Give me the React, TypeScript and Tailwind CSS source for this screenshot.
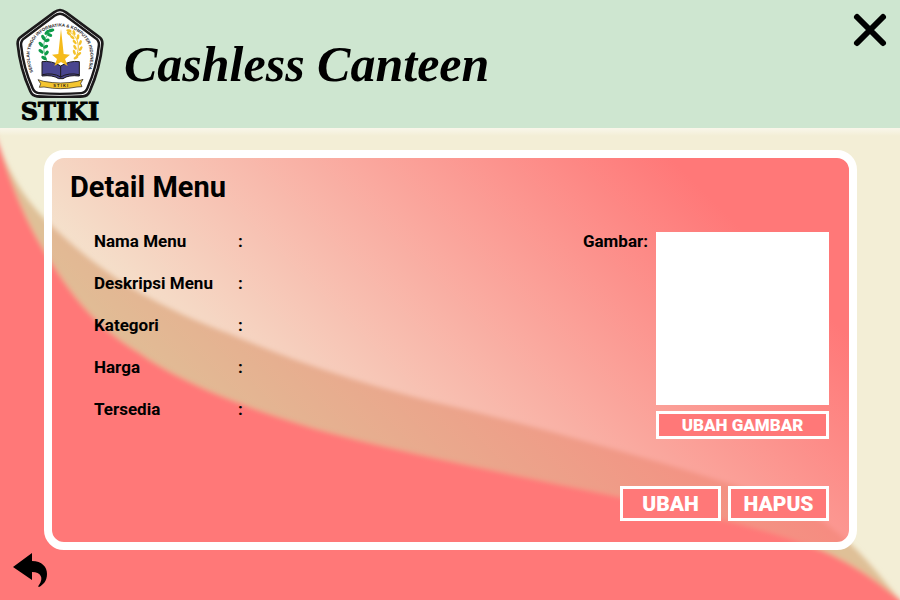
import React from "react";

const fields = ["Nama Menu", "Deskripsi Menu", "Kategori", "Harga", "Tersedia"];

function Crest() {
  const pentagon =
    "M180 30 Q188 30 198 37 L296 110 Q308 118 307 132 Q300 205 269 274 Q263 288 249 289 Q180 294 111 289 Q97 288 91 274 Q60 205 53 132 Q52 118 64 110 L162 37 Q172 30 180 30 Z";
  return (
    <svg viewBox="48 24 264 270" className="h-[90px] w-[88px]" aria-hidden="true">
      <path d={pentagon} fill="#fff" stroke="#1c1a1b" strokeWidth="8" />
      <g transform="translate(180 168) scale(.92) translate(-180 -168)">
        <path d={pentagon} fill="#fff" stroke="#1c1a1b" strokeWidth="8" />
      </g>
      <path id="crest-ring" d="M100 216 C70 152 102 84 180 79 C258 84 290 152 260 220" fill="none" />
      <text fontFamily="'Liberation Sans', Arial, sans-serif" fontSize="13" fontWeight="700" fill="#1c1a1b">
        <textPath href="#crest-ring">SEKOLAH TINGGI INFORMATIKA &amp; KOMPUTER INDONESIA</textPath>
      </text>
      <g fill="none" stroke="#0c9b49" strokeWidth="2">
        <path d="M161 90 C132 104 122 138 141 184" />
      </g>
      <g fill="#0c9b49">
        <ellipse cx="154" cy="91" rx="9" ry="5" transform="rotate(-10 154 91)" />
        <ellipse cx="141" cy="97" rx="9" ry="5" transform="rotate(-45 141 97)" />
        <ellipse cx="149" cy="105" rx="8" ry="5" transform="rotate(20 149 105)" />
        <ellipse cx="130" cy="113" rx="9" ry="5" transform="rotate(60 130 113)" />
        <ellipse cx="141" cy="121" rx="8" ry="5" transform="rotate(-15 141 121)" />
        <ellipse cx="123" cy="133" rx="9" ry="5" transform="rotate(50 123 133)" />
        <ellipse cx="137" cy="140" rx="8" ry="5" transform="rotate(-25 137 140)" />
        <ellipse cx="123" cy="154" rx="9" ry="5" transform="rotate(40 123 154)" />
        <ellipse cx="140" cy="159" rx="8" ry="5" transform="rotate(-50 140 159)" />
        <ellipse cx="132" cy="174" rx="9" ry="5" transform="rotate(30 132 174)" />
      </g>
      <path d="M200 91 C232 104 245 136 226 176" fill="none" stroke="#f4c22b" strokeWidth="3" />
      <g fill="#f4c22b">
        <ellipse cx="207" cy="92" rx="8" ry="4" transform="rotate(10 207 92)" />
        <ellipse cx="207" cy="101" rx="8" ry="4" transform="rotate(40 207 101)" />
        <ellipse cx="222" cy="98" rx="8" ry="4" transform="rotate(70 222 98)" />
        <ellipse cx="217" cy="112" rx="8" ry="4" transform="rotate(40 217 112)" />
        <ellipse cx="234" cy="111" rx="8" ry="4" transform="rotate(100 234 111)" />
        <ellipse cx="224" cy="126" rx="8" ry="4" transform="rotate(50 224 126)" />
        <ellipse cx="241" cy="128" rx="8" ry="4" transform="rotate(110 241 128)" />
        <ellipse cx="225" cy="142" rx="8" ry="4" transform="rotate(60 225 142)" />
        <ellipse cx="242" cy="146" rx="8" ry="4" transform="rotate(125 242 146)" />
        <ellipse cx="223" cy="157" rx="8" ry="4" transform="rotate(70 223 157)" />
        <ellipse cx="237" cy="162" rx="8" ry="4" transform="rotate(140 237 162)" />
        <ellipse cx="228" cy="173" rx="8" ry="4" transform="rotate(150 228 173)" />
      </g>
      <path
        d="M126 185 Q155 181 182 198 Q210 181 238 185 V228 Q205 224 189 236 H176 Q158 224 126 228 Z"
        fill="#49458f"
        stroke="#1c1a1b"
        strokeWidth="3"
      />
      <path d="M127 224 Q158 217 182 231 Q206 217 237 224 M182 198 V232" fill="none" stroke="#1c1a1b" strokeWidth="3" />
      <path d="M183 86 L191 162 L210 164 L195 177 L203 198 L183 186 L163 198 L171 177 L156 164 L175 162 Z" fill="#f5bb1b" />
      <path
        d="M114 239 L131 244 Q182 254 232 244 L249 238 L242 250 L246 260 L231 261 Q182 271 132 261 L118 262 L122 251 Z"
        fill="#f4c52f"
        stroke="#1c1a1b"
        strokeWidth="2"
      />
      <text
        x="182"
        y="260"
        textAnchor="middle"
        fontFamily="'Liberation Sans', Arial, sans-serif"
        fontSize="12"
        fontWeight="700"
        fill="#1c1a1b"
      >
        S T I K I
      </text>
    </svg>
  );
}

function Waves() {
  return (
    <svg
      viewBox="0 0 900 472"
      preserveAspectRatio="none"
      className="absolute inset-0 h-full w-full"
      aria-hidden="true"
    >
      <defs>
        <filter id="soft" x="-5%" y="-5%" width="110%" height="110%">
          <feGaussianBlur stdDeviation="2.5" />
        </filter>
      </defs>
      <g filter="url(#soft)">
        <path
          d="M-30 -60 L0 20 C12 52 30 78 53 99 C100 144 150 176 230 206 C300 236 380 262 459 280 C540 300 610 320 689 343 C750 362 796 376 826 396 C858 418 878 446 900 472 L930 510 H-30 Z"
          fill="#dfc097"
        />
        <path
          d="M-30 -60 L0 20 C14 66 30 102 53 137 C80 180 105 204 138 224 C180 254 240 278 316 301 C400 324 500 344 620 369 C700 386 760 398 821 422 C858 438 880 456 900 472 L930 510 H-30 Z"
          fill="#ff7878"
        />
      </g>
    </svg>
  );
}

export default function App() {
  return (
    <div className="flex min-h-screen flex-col bg-[#f3eed6] font-['Roboto',sans-serif] text-black">
      <header className="flex h-32 shrink-0 items-start bg-[#cee6d0] pr-3 pl-4">
        <div className="flex flex-col items-center pt-2">
          <Crest />
          <span className="font-['DejaVu_Serif',serif] text-2xl leading-7 font-bold [-webkit-text-stroke:1px_black]">STIKI</span>
        </div>
        <h1 className="flex-1 pt-[34px] pl-5 font-['Liberation_Serif',serif] text-[50px] leading-[60px] font-bold whitespace-nowrap italic">
          Cashless Canteen
        </h1>
        <button type="button" aria-label="Tutup" className="mt-3 cursor-pointer">
          <svg viewBox="0 0 36 36" className="size-9" aria-hidden="true">
            <path d="M5 5 L31 31 M31 5 L5 31" stroke="#000" strokeWidth="6" strokeLinecap="round" />
          </svg>
        </button>
      </header>

      <main className="relative flex flex-1 flex-col overflow-hidden">
        <Waves />
        <div className="absolute inset-x-0 top-0 h-2 bg-linear-to-b from-white/50 to-white/0" />

        <section className="relative mr-[43px] ml-11 mt-[22px] flex flex-1 flex-col rounded-[20px] border-8 border-white bg-[linear-gradient(45deg,rgba(255,120,120,0)_20%,#ff7878_84%)] bg-origin-border pt-[11px] pr-5 pb-[21px] pl-[18px]">
          <h2 className="text-[29px] leading-9 font-bold">Detail Menu</h2>

          <div className="flex flex-1 items-start justify-between pt-[27px] pl-6">
            <dl className="-mt-[3px] grid grid-cols-[144px_1fr] gap-y-[18px] text-[17px] leading-6 font-bold">
              {fields.map((name) => (
                <React.Fragment key={name}>
                  <dt>{name}</dt>
                  <dd>:</dd>
                </React.Fragment>
              ))}
            </dl>

            <div className="flex items-start gap-2">
              <span id="gambar" className="-mt-[3px] text-[17px] leading-6 font-bold">
                Gambar:
              </span>
              <div className="flex w-[173px] flex-col gap-1.5">
                <div role="img" aria-labelledby="gambar" className="aspect-square bg-white" />
                <button
                  type="button"
                  className="h-7 cursor-pointer border-3 border-white bg-[#ff7878] text-[17px] leading-5 font-black text-white"
                >
                  UBAH GAMBAR
                </button>
              </div>
            </div>
          </div>

          <div className="flex justify-end gap-[7px]">
            <button
              type="button"
              className="h-[35px] w-[101px] cursor-pointer border-3 border-white bg-[#ff7878] text-[21px] leading-7 font-black text-white"
            >
              UBAH
            </button>
            <button
              type="button"
              className="h-[35px] w-[101px] cursor-pointer border-3 border-white bg-[#ff7878] text-[21px] leading-7 font-black text-white"
            >
              HAPUS
            </button>
          </div>
        </section>

        <div className="relative flex h-[50px] shrink-0 items-start px-3 pt-0.5">
          <button type="button" aria-label="Kembali" className="cursor-pointer">
            <svg viewBox="0 0 36 36" className="size-9" aria-hidden="true">
              <path
                d="M1 15 L20 1 V9 C30 9 35 15 35 22 C35 29 31 33 27 35 C26 35 26 34 27 33 C32 26 29 20 20 20 V28 Z"
                fill="#000"
              />
            </svg>
          </button>
        </div>
      </main>
    </div>
  );
}
